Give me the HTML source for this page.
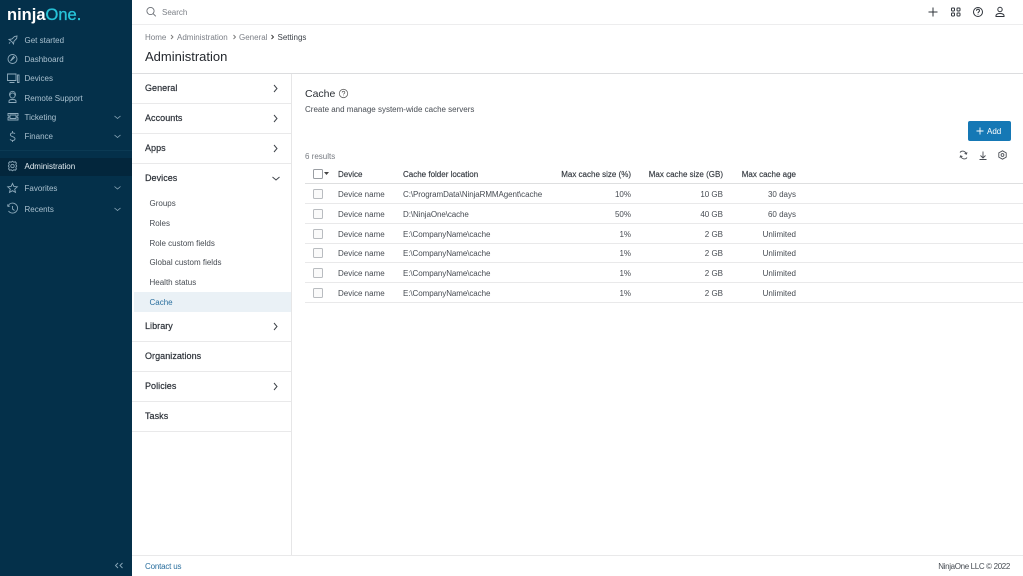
<!DOCTYPE html>
<html><head><meta charset="utf-8"><style>
html,body{margin:0;padding:0;background:#fff}
#p{position:relative;width:1023px;height:576px;overflow:hidden;background:#fff;font-family:"Liberation Sans",sans-serif;font-size:8px;color:#474c53}
#p div{position:absolute}
.t{white-space:nowrap;line-height:12px;margin-top:1px}
.s{color:#a9c0cf;left:24.5px}
.r{text-align:right}
.h{color:#33383f;font-weight:500;-webkit-text-stroke:.15px #33383f}
.m{font-size:9px;color:#2c3138;-webkit-text-stroke:.2px #2c3138;left:145px;letter-spacing:.05px;margin-top:0}
.u{left:149.5px;color:#474c53}
.l{background:#e9e9ea;height:1px}
.c{letter-spacing:-.08px}
.cb{width:8px;height:8px;border:1px solid #b9bcc0;border-radius:1.5px;left:313px;background:#fafafa}
svg{position:absolute;fill:none}
</style></head><body><div id="p">
<div style="left:0;top:0;width:132px;height:576px;background:#04304a"></div>
<div style="left:0;top:158px;width:132px;height:18px;background:#03263c"></div>
<div style="left:0;top:150px;width:132px;height:1px;background:#0b3a54"></div>

<div class="t" style="left:7px;top:6px;margin-top:0;font-size:16.500px;line-height:18px;font-weight:bold;color:#fff;letter-spacing:0">ninja<span style="color:#27c4d8;font-weight:normal;-webkit-text-stroke:.35px #27c4d8">One.</span></div>

<div class="t s" style="top:34px">Get started</div>
<div class="t s" style="top:53px">Dashboard</div>
<div class="t s" style="top:72px">Devices</div>
<div class="t s" style="top:92px">Remote Support</div>
<div class="t s" style="top:111px">Ticketing</div>
<div class="t s" style="top:130px">Finance</div>
<div class="t s" style="top:160px;color:#e4edf2">Administration</div>
<div class="t s" style="top:182px">Favorites</div>
<div class="t s" style="top:203px">Recents</div>

<svg style="left:0;top:0" width="132" height="576" stroke="#8fabbc" stroke-width=".9">
<path d="M9 39.500l3-.5 2.500-2.500 2.500-.5-.3 2.500-2.700 2.700-.5 2.800-1.500-2.200zM9 43.500l1.200-1.200"/>
<circle cx="12.500" cy="59" r="4.500"/><path d="M10.500 61l3-4.500 1 1z"/>
<path d="M7.500 74h8.500v6.500H7.500zM9.500 82.500h5M17.500 75h1.500v7.500h-1.500z"/>
<circle cx="12.500" cy="95.500" r="2.600"/><path d="M9 102.500h7v-1.500c0-1-1.500-1.500-3.500-1.500s-3.500.5-3.500 1.500zM9.500 95.500v-.8c0-4.500 6-4.500 6 0v.8"/>
<path d="M8 113.500h10v2.200a1 1 0 0 0 0 2v2.300H8v-2.300a1 1 0 0 0 0-2zM10 115h6v3.500h-6z"/>
<path d="M15 133.700c-.8-1-4.600-1.300-4.600 1s4.600 1.700 4.600 4c0 2.300-4 2-5 .7M12.500 131v1.500M12.500 140.500v1.500"/>
<circle cx="12.500" cy="166" r="1.700"/><path d="M12.500 161.200l1.300 1 1.600-.4 1 1.300-.6 1.500.9 1.400-.9 1.400.6 1.500-1 1.300-1.600-.4-1.300 1-1.300-1-1.600.4-1-1.300.6-1.500-.9-1.400.9-1.400-.6-1.500 1-1.300 1.600.4z"/>
<path d="M12.500 183.500l1.400 3 3.400.3-2.600 2.300.8 3.300-3-1.700-3 1.700.8-3.300-2.600-2.300 3.400-.3z"/>
<path d="M8 206a5 5 0 1 1 .5 5M7.500 204.500l.5 2 2-.5M12.500 206v3l2 1.500"/>
<g stroke-width=".8"><path d="M114.500 116l3 2.500 3-2.500M114.500 135l3 2.500 3-2.500M114.500 186.500l3 2.500 3-2.500M114.500 208l3 2.500 3-2.500"/></g>
<path d="M118 563l-2.500 2.500 2.500 2.500M122.500 563l-2.500 2.500 2.500 2.500" stroke="#8aa7b9"/>
</svg>

<div style="left:132px;top:0;width:891px;height:24px;background:#fff;border-bottom:1px solid #ededee"></div>
<div class="t" style="left:162px;top:6px;color:#7c8087;font-size:8px">Search</div>
<svg style="left:132px;top:0" width="891" height="24" stroke="#6a6e75" stroke-width=".9">
<circle cx="18.500" cy="11" r="3.600"/><path d="M21.300 13.800l2.500 2.500"/>
</svg>
<svg style="left:920px;top:0" width="95" height="24" stroke="#2f343b" stroke-width="1">
<path d="M13 7.500v9M8.500 12h9"/>
<rect x="31.500" y="8" width="3" height="3" rx=".7"/><rect x="37" y="8" width="3" height="3" rx=".7"/><rect x="31.500" y="13" width="3" height="3" rx=".7"/><rect x="37" y="13" width="3" height="3" rx=".7"/>
<circle cx="58" cy="12" r="4.500"/><path d="M56.500 10.700c0-2 3-2 3 0 0 1.300-1.500 1.200-1.500 2.500M58 14.500v.5"/>
<circle cx="80" cy="9.500" r="2.200"/><path d="M76 16.500v-1c0-1 1.500-2 4-2s4 1 4 2v1z"/>
</svg>

<div class="t" style="left:145px;top:31px;color:#7b7f86">Home</div>
<div class="t" style="left:177px;top:31px;color:#7b7f86">Administration</div>
<div class="t" style="left:239px;top:31px;color:#7b7f86">General</div>
<div class="t" style="left:277.500px;top:31px;color:#3d4249">Settings</div>
<svg style="left:130px;top:30px" width="150" height="14" stroke-width=".9">
<path d="M41 5l2 2-2 2M103.500 5l2 2-2 2" stroke="#777"/><path d="M141.500 5l2 2-2 2" stroke="#333"/>
</svg>
<div class="t" style="left:145px;top:49px;margin-top:0;font-size:13px;line-height:15px;color:#24282e">Administration</div>
<div class="l" style="left:132px;top:73px;width:891px;background:#dcdddf"></div>

<div style="left:291px;top:74px;width:1px;height:481px;background:#e6e6e7"></div>
<div class="t m" style="top:82px">General</div>
<div class="t m" style="top:112px">Accounts</div>
<div class="t m" style="top:142px">Apps</div>
<div class="t m" style="top:172px">Devices</div>
<div class="t m" style="top:320px">Library</div>
<div class="t m" style="top:350px">Organizations</div>
<div class="t m" style="top:380px">Policies</div>
<div class="t m" style="top:410px">Tasks</div>
<div class="l" style="left:132px;top:103px;width:159px"></div>
<div class="l" style="left:132px;top:133px;width:159px"></div>
<div class="l" style="left:132px;top:163px;width:159px"></div>
<div class="l" style="left:132px;top:341px;width:159px"></div>
<div class="l" style="left:132px;top:371px;width:159px"></div>
<div class="l" style="left:132px;top:401px;width:159px"></div>
<div class="l" style="left:132px;top:431px;width:159px"></div>
<div style="left:134px;top:292px;width:157px;height:20px;background:#eaf1f6"></div>
<div class="t u" style="top:197px">Groups</div>
<div class="t u" style="top:217px">Roles</div>
<div class="t u" style="top:237px">Role custom fields</div>
<div class="t u" style="top:256px">Global custom fields</div>
<div class="t u" style="top:276px">Health status</div>
<div class="t u" style="top:296px;color:#2a6f9e">Cache</div>
<svg style="left:270px;top:80px" width="12" height="320" stroke="#3f444b" stroke-width="1">
<path d="M4 5l3 3.500-3 3.500M4 35l3 3.500-3 3.500M4 65l3 3.500-3 3.500M2.500 97l3.500 3 3.500-3M4 243l3 3.500-3 3.500M4 303l3 3.500-3 3.500"/>
</svg>

<div class="t" style="left:305px;top:87px;margin-top:0;font-size:10.500px;line-height:14px;color:#2b2f35">Cache</div>
<svg style="left:338px;top:88px" width="12" height="12" stroke="#666" stroke-width=".8"><circle cx="5.500" cy="5.500" r="4.200"/><path d="M4.200 4.500c0-1.700 2.600-1.700 2.600 0 0 1.100-1.300 1-1.300 2M5.500 7.600v.5"/></svg>
<div class="t" style="left:305px;top:103px">Create and manage system-wide cache servers</div>
<div style="left:968px;top:121px;width:43px;height:20px;background:#1578b5;border-radius:2px"></div>
<svg style="left:975px;top:126px" width="11" height="10" stroke="#fff" stroke-width=".9"><path d="M5 1.500v7M1.500 5h7"/></svg>
<div class="t" style="left:987px;top:125px;color:#fff">Add</div>
<div class="t" style="left:305px;top:150px;color:#777b82">6 results</div>
<svg style="left:955px;top:148px" width="56" height="14" stroke="#4a4e55" stroke-width=".9">
<path d="M5 4.500a3.300 3.300 0 0 1 6 1.500M12 9.500a3.300 3.300 0 0 1-6-1.500M9.500 5.500l2 .7.500-2M7.500 8.500l-2-.7-.5 2"/>
<path d="M28 3.500v6M25.500 7.500l2.500 2.500 2.500-2.500M24.500 11.500h7"/>
<circle cx="47.500" cy="7" r="1.400"/><path d="M47.500 2.800l3.700 2.100v4.200l-3.700 2.100-3.700-2.100V4.900z"/>
</svg>

<div class="cb" style="top:169px;border-color:#9a9ea3;background:#fff"></div>
<svg style="left:323px;top:171px" width="8" height="6"><path d="M1 1h5L3.500 4z" fill="#444"/></svg>
<div class="t h" style="left:338px;top:168px">Device</div>
<div class="t h" style="left:403px;top:168px">Cache folder location</div>
<div class="t h r" style="left:531px;width:100px;top:168px">Max cache size (%)</div>
<div class="t h r" style="left:623px;width:100px;top:168px">Max cache size (GB)</div>
<div class="t h r" style="left:696px;width:100px;top:168px">Max cache age</div>
<div class="l" style="left:305px;top:183px;width:718px;background:#dedfe0"></div>
<div class="l" style="left:305px;top:203px;width:718px"></div>
<div class="l" style="left:305px;top:223px;width:718px"></div>
<div class="l" style="left:305px;top:243px;width:718px"></div>
<div class="l" style="left:305px;top:262px;width:718px"></div>
<div class="l" style="left:305px;top:282px;width:718px"></div>
<div class="l" style="left:305px;top:302px;width:718px"></div>

<div class="cb" style="top:189px"></div><div class="t" style="left:338px;top:188px">Device name</div><div class="t c" style="left:403px;top:188px">C:\ProgramData\NinjaRMMAgent\cache</div><div class="t r" style="left:531px;width:100px;top:188px">10%</div><div class="t r" style="left:623px;width:100px;top:188px">10 GB</div><div class="t r" style="left:696px;width:100px;top:188px">30 days</div>
<div class="cb" style="top:209px"></div><div class="t" style="left:338px;top:208px">Device name</div><div class="t c" style="left:403px;top:208px">D:\NinjaOne\cache</div><div class="t r" style="left:531px;width:100px;top:208px">50%</div><div class="t r" style="left:623px;width:100px;top:208px">40 GB</div><div class="t r" style="left:696px;width:100px;top:208px">60 days</div>
<div class="cb" style="top:229px"></div><div class="t" style="left:338px;top:228px">Device name</div><div class="t c" style="left:403px;top:228px">E:\CompanyName\cache</div><div class="t r" style="left:531px;width:100px;top:228px">1%</div><div class="t r" style="left:623px;width:100px;top:228px">2 GB</div><div class="t r" style="left:696px;width:100px;top:228px">Unlimited</div>
<div class="cb" style="top:248px"></div><div class="t" style="left:338px;top:247px">Device name</div><div class="t c" style="left:403px;top:247px">E:\CompanyName\cache</div><div class="t r" style="left:531px;width:100px;top:247px">1%</div><div class="t r" style="left:623px;width:100px;top:247px">2 GB</div><div class="t r" style="left:696px;width:100px;top:247px">Unlimited</div>
<div class="cb" style="top:268px"></div><div class="t" style="left:338px;top:267px">Device name</div><div class="t c" style="left:403px;top:267px">E:\CompanyName\cache</div><div class="t r" style="left:531px;width:100px;top:267px">1%</div><div class="t r" style="left:623px;width:100px;top:267px">2 GB</div><div class="t r" style="left:696px;width:100px;top:267px">Unlimited</div>
<div class="cb" style="top:288px"></div><div class="t" style="left:338px;top:287px">Device name</div><div class="t c" style="left:403px;top:287px">E:\CompanyName\cache</div><div class="t r" style="left:531px;width:100px;top:287px">1%</div><div class="t r" style="left:623px;width:100px;top:287px">2 GB</div><div class="t r" style="left:696px;width:100px;top:287px">Unlimited</div>

<div class="l" style="left:132px;top:555px;width:891px"></div>
<div class="t" style="left:145px;top:560px;color:#2a6f9e;letter-spacing:-.2px">Contact us</div>
<div class="t r" style="left:860px;width:150px;top:560px;color:#474c53;letter-spacing:-.35px">NinjaOne LLC © 2022</div>
</div></body></html>
